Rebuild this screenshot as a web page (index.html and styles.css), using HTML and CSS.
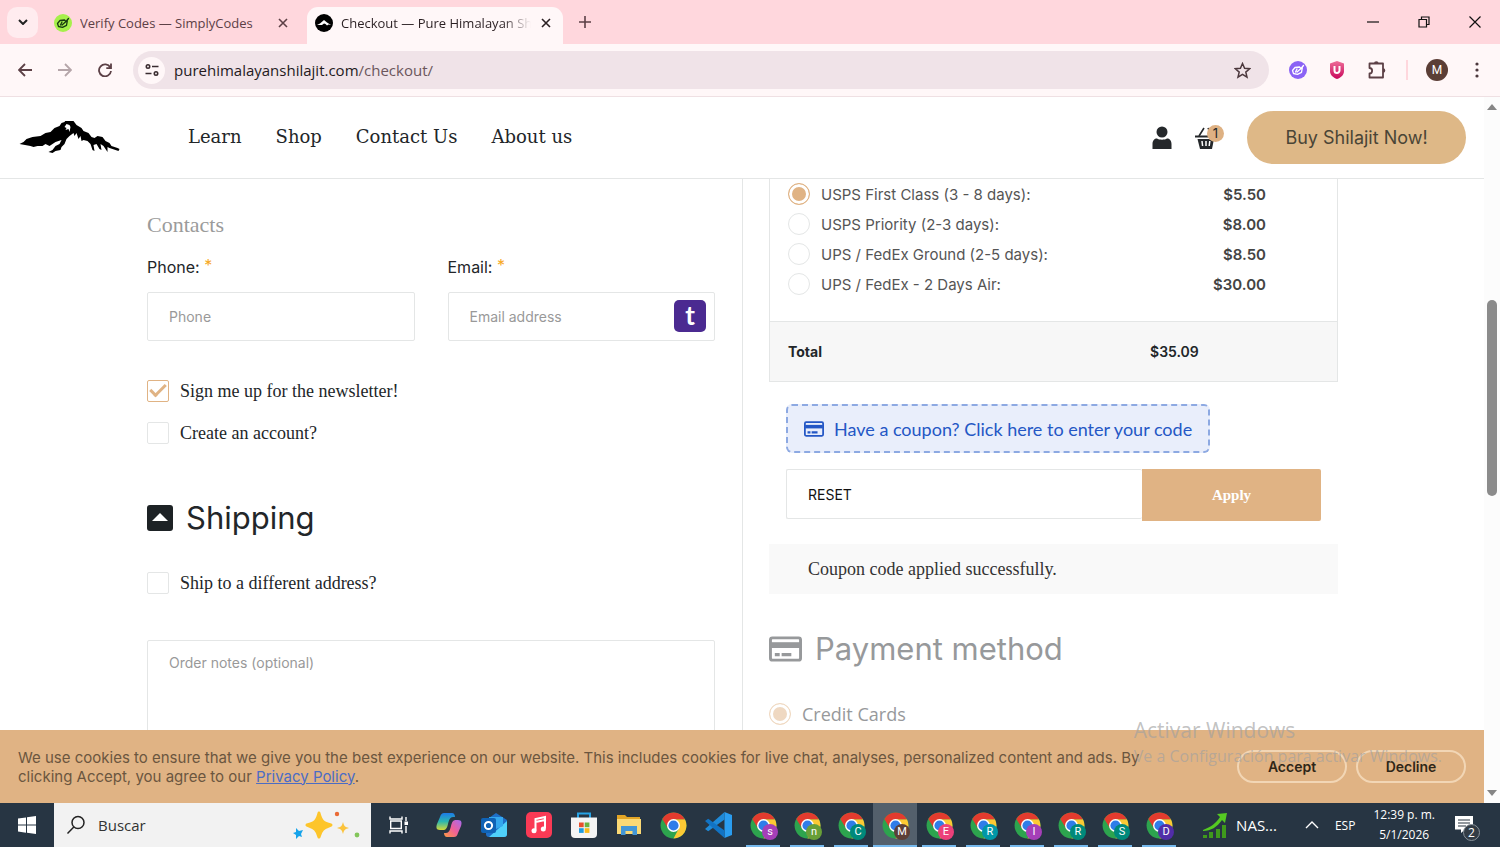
FILE: index.html
```html
<!DOCTYPE html>
<html lang="en">
<head>
    <meta charset="UTF-8">
    <meta name="viewport" content="width=device-width, initial-scale=1.0">
    <title>Checkout — Pure Himalayan Shilajit</title>
    <link rel="stylesheet" href="styles.css">
</head>
<body>
    <!-- shared icons -->
    <svg class="sprite" width="0" height="0" aria-hidden="true">
        <symbol id="i-close" viewBox="0 0 10 10"><path d="M1 1l8 8M9 1l-8 8" fill="none" stroke="currentColor" stroke-width="1.6"/></symbol>
        <symbol id="i-card" viewBox="0 0 34 26">
            <rect x="1.5" y="1.5" width="31" height="23" rx="2" fill="none" stroke="currentColor" stroke-width="3"/>
            <path d="M2 6h30v6H2z" fill="currentColor"/>
            <path d="M6 17h5v3.500H6zM13 17h10v3.500H13z" fill="currentColor"/>
        </symbol>
        <symbol id="i-tag" viewBox="0 0 18 18">
            <path d="M3.500 9.500L6 6.500l4.500-.5 1.500 1.500 2.500-3M3.500 9.500l1 3 4 .8 4-2 .8-4.500M6.500 11l1.500-3M8 11l4-3.500" fill="none" stroke="currentColor" stroke-width="1.3" stroke-linejoin="round" stroke-linecap="round"/>
        </symbol>
        <symbol id="i-chrome" viewBox="0 0 48 48">
            <circle cx="24" cy="24" r="23" fill="#2da44e"/>
            <path d="M24 13h20.300A23 23 0 0 1 24 47l9.500-17.500z" fill="#fcc934"/>
            <path d="M4.100 12.500A23 23 0 0 1 44.300 13H24L14.500 29.500z" fill="#e33b2e"/>
            <circle cx="24" cy="24" r="11.500" fill="#fff"/>
            <circle cx="24" cy="24" r="9" fill="#2f7de9"/>
        </symbol>
    </svg>

    <div class="tab-strip">
        <button class="tab-search" aria-label="Search tabs">
            <svg width="10" height="6" viewBox="0 0 10 6"><path d="M1 1l4 4 4-4" fill="none" stroke="#222" stroke-width="2"/></svg>
        </button>
        <div class="tab">
            <svg class="favicon lime" width="18" height="18"><circle cx="9" cy="9" r="9" fill="#a6f04a"/><use href="#i-tag"/></svg>
            <span class="tab-title">Verify Codes — SimplyCodes</span>
            <button class="tab-close" aria-label="Close tab"><svg width="10" height="10"><use href="#i-close"/></svg></button>
        </div>
        <div class="tab active">
            <svg class="favicon" width="18" height="18" viewBox="0 0 18 18"><circle cx="9" cy="9" r="9" fill="#000"/><path d="M2 11l3-1.500L9 6l3 2.500 4 2.500-2.500-.5-1.500 1-1.500-1.500L9 9.500 7 11l-2 0z" fill="#fff"/></svg>
            <span class="tab-title">Checkout — Pure Himalayan Shilajit</span>
            <button class="tab-close" aria-label="Close tab"><svg width="10" height="10"><use href="#i-close"/></svg></button>
        </div>
        <button class="new-tab" aria-label="New tab"><svg width="12" height="12" viewBox="0 0 12 12"><path d="M6 0v12M0 6h12" stroke="#5c4046" stroke-width="1.600"/></svg></button>
        <div class="window-buttons">
            <button aria-label="Minimize"><svg width="12" height="12" viewBox="0 0 12 12"><path d="M0 6h12" stroke="#111" stroke-width="1.200"/></svg></button>
            <button aria-label="Restore"><svg width="12" height="12" viewBox="0 0 12 12"><path d="M1 3.500h7.500V11H1zM3.500 3.500V1H11v7.500H8.500" fill="none" stroke="#111" stroke-width="1.200"/></svg></button>
            <button aria-label="Close window"><svg width="12" height="12" viewBox="0 0 12 12"><path d="M.5.500l11 11M11.500.500l-11 11" stroke="#111" stroke-width="1.200"/></svg></button>
        </div>
    </div>

    <div class="toolbar">
        <button class="nav-btn" aria-label="Back"><svg width="14" height="14" viewBox="0 0 14 14"><path d="M14 7H1.500M7 1L1 7l6 6" fill="none" stroke="#5c4046" stroke-width="1.800"/></svg></button>
        <button class="nav-btn" aria-label="Forward"><svg width="14" height="14" viewBox="0 0 14 14"><path d="M0 7h12.500M7 1l6 6-6 6" fill="none" stroke="#b5a5a9" stroke-width="1.800"/></svg></button>
        <button class="nav-btn" aria-label="Reload"><svg width="14" height="14" viewBox="0 0 14 14"><path d="M12.300 4.500A6 6 0 1 0 13 8M13 .500v4.700H8.300" fill="none" stroke="#5c4046" stroke-width="1.800"/></svg></button>
        <div class="omnibox">
            <button class="site-info" aria-label="View site information">
                <svg width="14" height="12" viewBox="0 0 14 12"><g fill="none" stroke="#3a2c30" stroke-width="1.600"><circle cx="3" cy="2.500" r="1.700"/><path d="M7 2.500h6.500M.500 9.500h6"/><circle cx="11" cy="9.500" r="1.700"/></g></svg>
            </button>
            <span class="url">purehimalayanshilajit.com<span>/checkout/</span></span>
            <button class="star" aria-label="Bookmark this tab"><svg width="17" height="17" viewBox="0 0 17 17"><path d="M8.500 1.500l2.100 4.700 5.100.5-3.900 3.400 1.200 5-4.500-2.700L4 15.100l1.200-5L1.300 6.700l5.100-.5z" fill="none" stroke="#4c383d" stroke-width="1.500"/></svg></button>
        </div>
        <div class="extensions">
            <svg class="white" width="18" height="18"><circle cx="9" cy="9" r="9" fill="#8b63f5"/><use href="#i-tag"/></svg>
            <svg width="16" height="18" viewBox="0 0 16 18"><defs><linearGradient id="shield" x1="0" y1="0" x2="0" y2="1"><stop offset="0" stop-color="#ee6d98"/><stop offset="1" stop-color="#c8085c"/></linearGradient></defs><path d="M8 0l7 2.500V10c0 4-3 6.500-7 8-4-1.500-7-4-7-8V2.500z" fill="url(#shield)"/><path d="M5.500 5v4.500a2.500 2.500 0 0 0 5 0V5" fill="none" stroke="#fff" stroke-width="2"/></svg>
            <svg width="20" height="20" viewBox="0 0 20 20"><path d="M2.500 3.500h13.500V17.500H2.500v-4c3.500 0 3.500-5.500 0-5.500z" fill="none" stroke="#5c4046" stroke-width="1.800" stroke-linejoin="round"/><path d="M7 3.500a2.300 2.300 0 0 1 4.600 0zM16 8.200a2.300 2.300 0 0 1 0 4.600z" fill="#5c4046"/></svg>
        </div>
        <span class="profile">M</span>
        <button class="menu-btn" aria-label="Menu"><svg width="4" height="16" viewBox="0 0 4 16"><g fill="#4c383d"><circle cx="2" cy="2" r="1.600"/><circle cx="2" cy="8" r="1.600"/><circle cx="2" cy="14" r="1.600"/></g></svg></button>
    </div>

    <div class="viewport">
        <div class="page">
            <header class="site-header">
                <a class="logo" href="#" aria-label="Pure Himalayan Shilajit">
                    <svg width="103" height="34" viewBox="-1 5 102 34"><path fill="#000" fill-rule="evenodd" d="M0 28l4-2 3-3 6-2 8-1 5-3 5-1 4-4 5-2 2-3 3-1 2-3 2-1 5 3 3 4 5 3 2 3 5 2 3 4 3 1 3-2 5 1 3 4 4 2 2 3 6 2 2 1-1 2-9-3-2-1 0 5-2-3-2-3-3-2 1 6-2-1-3-5-3 1 1 6-2-1-2-6-3-3-4-1-2 1-1-5-2 3-2-6-2 3-1-3-4 3-3 3-2 5-3 3-1 3-5 1-3 2-4-1 4-2 3-4 4-2 2-4-6 2-6 4-4-2-3 2-5 0-4 1-3-1zM45 11l2 1-1 2 3-1 1 3 1-5-1-2-3-1z"/></svg>
                </a>
                <nav class="main-nav">
                    <a href="#">Learn</a>
                    <a href="#">Shop</a>
                    <a href="#">Contact Us</a>
                    <a href="#">About us</a>
                </nav>
                <div class="header-tools">
                    <a href="#" aria-label="My account"><svg width="20" height="24" viewBox="0 0 20 24"><circle cx="10" cy="6" r="5.500" fill="#25282b"/><path d="M.500 23v-5c0-3.500 2-5.500 4.500-5.500 2 1.600 8 1.600 10 0 2.500 0 4.500 2 4.500 5.500v5z" fill="#25282b"/></svg></a>
                    <a class="cart" href="#" aria-label="Cart">
                        <svg width="24" height="24" viewBox="0 0 24 24"><path d="M5 10l5-8M18 10l-4-8" stroke="#25282b" stroke-width="1.600"/><path d="M1 9.500h21v2H1z" fill="#25282b"/><path d="M3.500 13h16.500l-2 10h-12z" fill="#25282b"/><path d="M8 15l.6 5M12 15v5M15.800 15l-.6 5" stroke="#fff" stroke-width="1.500"/></svg>
                        <span class="cart-count">1</span>
                    </a>
                    <button class="buy-btn">Buy Shilajit Now!</button>
                </div>
            </header>

            <main class="checkout">
                <section class="details">
                    <h3 class="contacts-title">Contacts</h3>
                    <div class="field-row">
                        <div class="field">
                            <label for="phone">Phone: <sup>*</sup></label>
                            <input class="text-input" id="phone" type="tel" placeholder="Phone">
                        </div>
                        <div class="field">
                            <label for="email">Email: <sup>*</sup></label>
                            <input class="text-input" id="email" type="email" placeholder="Email address">
                            <span class="autofill">t</span>
                        </div>
                    </div>
                    <div class="checks">
                        <label class="check"><input type="checkbox" checked> Sign me up for the newsletter!</label>
                        <label class="check"><input type="checkbox"> Create an account?</label>
                    </div>
                    <h2 class="section-title shipping-title">
                        <svg width="26" height="26" viewBox="0 0 26 26"><rect width="26" height="26" rx="3" fill="#1d2225"/><path d="M5 16l8-8 8 8z" fill="#fff"/></svg>
                        Shipping
                    </h2>
                    <label class="check"><input type="checkbox"> Ship to a different address?</label>
                    <textarea class="notes" placeholder="Order notes (optional)" aria-label="Order notes"></textarea>
                </section>

                <section class="order">
                    <table class="order-table">
                        <tbody>
                            <tr>
                                <td colspan="2">
                                    <ul class="shipping-methods">
                                        <li><input type="radio" name="ship" id="ship1" checked><label for="ship1">USPS First Class (3 - 8 days):</label><b>$5.50</b></li>
                                        <li><input type="radio" name="ship" id="ship2"><label for="ship2">USPS Priority (2-3 days):</label><b>$8.00</b></li>
                                        <li><input type="radio" name="ship" id="ship3"><label for="ship3">UPS / FedEx Ground (2-5 days):</label><b>$8.50</b></li>
                                        <li><input type="radio" name="ship" id="ship4"><label for="ship4">UPS / FedEx - 2 Days Air:</label><b>$30.00</b></li>
                                    </ul>
                                </td>
                            </tr>
                        </tbody>
                        <tfoot>
                            <tr><th>Total</th><td>$35.09</td></tr>
                        </tfoot>
                    </table>

                    <form class="coupon">
                        <a class="coupon-toggle" href="#"><svg width="20" height="16"><use href="#i-card"/></svg>Have a coupon? Click here to enter your code</a>
                        <div class="coupon-form">
                            <input class="text-input" type="text" value="RESET" aria-label="Coupon code">
                            <button type="button">Apply</button>
                        </div>
                    </form>
                    <div class="notice">Coupon code applied successfully.</div>

                    <div class="payment">
                        <h2 class="section-title"><svg width="33" height="26"><use href="#i-card"/></svg>Payment method</h2>
                        <label class="pay-option"><input type="radio" name="pay" checked> Credit Cards</label>
                    </div>
                </section>
            </main>

            <div class="cookie-bar">
                <p>We use cookies to ensure that we give you the best experience on our website. This includes cookies for live chat, analyses, personalized content and ads. By clicking Accept, you agree to our <a href="#">Privacy Policy</a>.</p>
                <button>Accept</button>
                <button>Decline</button>
            </div>
        </div>
        <div class="scrollbar">
            <svg width="12" height="6" viewBox="0 0 12 6"><path d="M1 6l5-6 5 6z" fill="#858585"/></svg>
            <div class="track"><div class="thumb"></div></div>
            <svg width="12" height="6" viewBox="0 0 12 6"><path d="M1 0l5 6 5-6z" fill="#858585"/></svg>
        </div>
    </div>

    <div class="watermark">
        <strong>Activar Windows</strong>
        <span>Ve a Configuración para activar Windows.</span>
    </div>

    <div class="taskbar" lang="es">
        <button class="start" aria-label="Inicio"><svg width="18" height="18" viewBox="0 0 18 18"><path d="M0 2.500L8 1.400V8.600H0zM9 1.200L18 0v8.600H9zM0 9.500h8v7.200L0 15.500zM9 9.500h9V18L9 16.800z" fill="#fff"/></svg></button>
        <label class="search">
            <svg width="20" height="20" viewBox="0 0 20 20"><circle cx="12" cy="7.500" r="6" fill="none" stroke="#222" stroke-width="1.500"/><path d="M7.800 12L1.500 18.500" stroke="#222" stroke-width="1.500"/></svg>
            <input type="text" placeholder="Buscar" aria-label="Buscar">
            <svg width="68" height="30" viewBox="0 0 68 30"><path d="M27 3c2 8 4 10 12 12-8 3-10 5-12 12-2-7-4-9-12-12 8-2 10-4 12-12z" fill="#fdc52b" stroke="#fdc52b" stroke-width="3" stroke-linejoin="round"/><path d="M51 12c1 4 2 5 6 6-4 1-5 2-6 6-1-4-2-5-6-6 4-1 5-2 6-6z" fill="#fbc33b"/><path d="M4 18l3 3 4-1-2 4 1 3-3-1-3 3 0-4-3-2 3-1z" fill="#16a3ea"/><circle cx="45" cy="4" r="2.200" fill="#ea6a35"/><circle cx="65" cy="25" r="2.400" fill="#83c65a"/></svg>
        </label>
        <button class="task-view" aria-label="Vista de tareas"><svg width="20" height="18" viewBox="0 0 20 18"><path d="M1 .500v2.500h12V.500M1 17.500V15h12v2.500M1.700 5h10.600v7.500H1.700zM17 1v4M17 10v7" fill="none" stroke="#fff" stroke-width="1.400"/><path d="M15.500 5.500h3.500v3.500h-3.500z" fill="#fff"/></svg></button>
        <div class="apps">
            <button aria-label="Copilot"><svg width="26" height="26" viewBox="0 0 26 26"><defs><linearGradient id="cop1" x1="0" y1="0" x2="0" y2="1"><stop offset="0" stop-color="#1c7be8"/><stop offset=".5" stop-color="#2bb6b0"/><stop offset="1" stop-color="#d5d937"/></linearGradient><linearGradient id="cop2" x1="1" y1="0" x2="0" y2="1"><stop offset="0" stop-color="#a56bf0"/><stop offset=".5" stop-color="#ee5f9b"/><stop offset="1" stop-color="#ff9c40"/></linearGradient></defs><path d="M8 1h8c2 0 3 2 3 4h-2c-3 0-4 3-5 7s-2 6-5 6H4c-4 0-4-3-3-6l3-7c1-3 2-4 4-4z" fill="url(#cop1)"/><path d="M18 25h-7c-2 0-3-2-3-4h2c3 0 4-3 5-7s2-6 5-6h2c4 0 4 3 3 6l-3 7c-1 3-2 4-4 4z" fill="url(#cop2)"/></svg></button>
            <button aria-label="Outlook"><svg width="28" height="26" viewBox="0 0 28 26"><path d="M6 8l10-7 11 7v14a3 3 0 0 1-3 3H9a3 3 0 0 1-3-3z" fill="#1e6fc8"/><path d="M27 9v13a3 3 0 0 1-3 3H9z" fill="#4fd0fa"/><path d="M9 5h14v9l-7 3-7-3z" fill="#34a7ee"/><rect x="1" y="6" width="15" height="15" rx="2" fill="#0f62b5"/><circle cx="8.500" cy="13.500" r="3.600" fill="none" stroke="#fff" stroke-width="2"/></svg></button>
            <button aria-label="Música"><svg width="26" height="26" viewBox="0 0 26 26"><rect width="26" height="26" rx="5" fill="#fa3a55"/><path d="M9.500 18.500V7l9.500-2v11.500M9.500 10l9.500-2" fill="none" stroke="#fff" stroke-width="2"/><circle cx="8" cy="18.800" r="2.500" fill="#fff"/><circle cx="17.300" cy="17" r="2.500" fill="#fff"/></svg></button>
            <button aria-label="Store"><svg width="26" height="26" viewBox="0 0 26 26"><path d="M7 6V1.500h12V6" fill="none" stroke="#27a3e6" stroke-width="2"/><path d="M0 5.500h26V22a4 4 0 0 1-4 4H4a4 4 0 0 1-4-4z" fill="#f4f4f4"/><path d="M8 10.500h4.700v4.700H8z" fill="#e8502c"/><path d="M13.700 10.500h4.700v4.700h-4.700z" fill="#6db33f"/><path d="M8 16.200h4.700v4.700H8z" fill="#1e9be0"/><path d="M13.700 16.200h4.700v4.700h-4.700z" fill="#f9b91a"/></svg></button>
            <button aria-label="Explorador"><svg width="24" height="22" viewBox="0 0 24 22"><path d="M0 1h8l2 2h13v5H0z" fill="#e2a526"/><path d="M0 5h24v15H0z" fill="#fbd975"/><path d="M4 21V12h16v9h-4.500v-4h-7v4z" fill="#4396d6"/></svg></button>
            <button aria-label="Chrome"><svg width="27" height="27"><use href="#i-chrome"/></svg></button>
            <button aria-label="Visual Studio Code"><svg width="27" height="26" viewBox="0 0 27 26"><path d="M19.500 0L27 3v20l-7.500 3z" fill="#2a9df0"/><path d="M19.500 0v7.500L3.200 19.300 0 17z" fill="#1f8ad8"/><path d="M19.500 26v-7.500L3.200 6.700 0 9z" fill="#1173c4"/></svg></button>
        </div>
        <div class="windows">
            <button aria-label="Chrome s"><svg width="27" height="27"><use href="#i-chrome"/></svg><span class="badge purple">s</span></button>
            <button aria-label="Chrome n"><svg width="27" height="27"><use href="#i-chrome"/></svg><span class="badge green">n</span></button>
            <button aria-label="Chrome C"><svg width="27" height="27"><use href="#i-chrome"/></svg><span class="badge teal">C</span></button>
            <button class="current" aria-label="Chrome M"><svg width="27" height="27"><use href="#i-chrome"/></svg><span class="badge brown">M</span></button>
            <button aria-label="Chrome E"><svg width="27" height="27"><use href="#i-chrome"/></svg><span class="badge pink">E</span></button>
            <button aria-label="Chrome R"><svg width="27" height="27"><use href="#i-chrome"/></svg><span class="badge cyan">R</span></button>
            <button aria-label="Chrome I"><svg width="27" height="27"><use href="#i-chrome"/></svg><span class="badge purple">I</span></button>
            <button aria-label="Chrome R 2"><svg width="27" height="27"><use href="#i-chrome"/></svg><span class="badge teal">R</span></button>
            <button aria-label="Chrome S"><svg width="27" height="27"><use href="#i-chrome"/></svg><span class="badge teal">S</span></button>
            <button aria-label="Chrome D"><svg width="27" height="27"><use href="#i-chrome"/></svg><span class="badge indigo">D</span></button>
        </div>
        <div class="tray">
            <button class="news"><svg width="26" height="26" viewBox="0 0 26 26"><path d="M1 26v-3h4v3zM7 26v-6h4v6zM14 26v-9h4v9zM20 26V13h4v13z" fill="#3f9a1c"/><path d="M1 19c8 0 14-4 19-11l3 3 2-10-10 1 3 3c-4 6-9 10-17 13z" fill="#55c922"/></svg>NAS...</button>
            <button class="up" aria-label="Mostrar iconos ocultos"><svg width="14" height="8" viewBox="0 0 14 8"><path d="M1 7l6-6 6 6" fill="none" stroke="#fff" stroke-width="1.400"/></svg></button>
            <span class="lang">ESP</span>
            <div class="clock"><span>12:39 p. m.</span><span>5/1/2026</span></div>
            <button class="notifications" aria-label="Notificaciones">
                <svg width="18" height="18" viewBox="0 0 18 18"><path d="M0 0h18v13.500h-8L6 17v-3.500H0z" fill="#fff"/><path d="M3 4h12M3 7h12M3 10h8" stroke="#26333f" stroke-width="1.200"/></svg>
                <span class="count">2</span>
            </button>
        </div>
    </div>
</body>
</html>
```

FILE: styles.css
```css
:root {
    --sand: #e0b384;
    --line: #e4e6e6;
    --dark: #222629;
    --sans: Inter, "Open Sans", sans-serif;
    --serif: "Liberation Serif", serif;
    --ui: "Open Sans", "Noto Sans", sans-serif;
}

* {
    margin: 0;
    padding: 0;
    box-sizing: border-box;
}

body {
    height: 100vh;
    display: flex;
    flex-direction: column;
    overflow: hidden;
    position: relative;
    font-family: var(--sans);
    color: var(--dark);
    background: #fff;
}

button {
    border: none;
    background: none;
    font: inherit;
    color: inherit;
    cursor: pointer;
}

a {
    color: inherit;
    text-decoration: none;
}

svg {
    display: block;
    flex: none;
}

.sprite {
    position: absolute;
}

/* browser tabs */
.tab-strip {
    display: flex;
    align-items: center;
    height: 44px;
    padding-left: 7px;
    background: #ffd7dd;
    font: 13px var(--ui);
    color: #5c4046;
}

.tab-search {
    display: grid;
    place-items: center;
    width: 31px;
    height: 31px;
    border-radius: 10px;
    background: #ffecef;
    margin-right: 8px;
}

.tab {
    display: flex;
    align-items: center;
    gap: 8px;
    width: 261px;
    height: 37px;
    margin-top: 7px;
    padding: 0 19px 6px 8px;
}

.tab.active {
    width: 256px;
    padding-right: 12px;
    background: #fff7f8;
    border-radius: 11px 11px 0 0;
    color: #2a1f22;
}

.tab-title {
    flex: 1;
    overflow: hidden;
    white-space: nowrap;
}

.active .tab-title {
    margin-right: 2px;
    mask-image: linear-gradient(to right, #000 85%, transparent);
}

.favicon.lime {
    color: #173a10;
}

.white {
    color: #fff;
}

.new-tab {
    margin-left: 16px;
}

.window-buttons {
    display: flex;
    margin-left: auto;
}

.window-buttons button {
    display: grid;
    place-items: center;
    width: 51px;
    height: 44px;
}

/* browser toolbar */
.toolbar {
    display: flex;
    align-items: center;
    height: 53px;
    padding: 0 21px 0 5px;
    background: #fff7f8;
    border-bottom: 1px solid #efe0e3;
}

.nav-btn {
    display: grid;
    place-items: center;
    width: 40px;
    height: 40px;
}

.omnibox {
    flex: 1;
    display: flex;
    align-items: center;
    height: 38px;
    margin-left: 8px;
    padding: 0 18px 0 5px;
    border-radius: 19px;
    background: #f0e3e8;
    font: 15px var(--ui);
    color: #241a1d;
}

.site-info {
    display: grid;
    place-items: center;
    width: 27px;
    height: 27px;
    margin-right: 9px;
    border-radius: 50%;
    background: #fff7f8;
}

.url {
    flex: 1;
}

.url span {
    color: #6b565c;
}

.extensions {
    display: flex;
    align-items: center;
    gap: 22px;
    padding: 0 19px;
    border-right: 2px solid #ffd7dd;
}

.extensions svg:first-child {
    margin-left: 1px;
}

.profile {
    display: grid;
    place-items: center;
    width: 22px;
    height: 22px;
    margin: 0 27px 0 18px;
    border-radius: 50%;
    background: #5b3e36;
    color: #fff;
    font: 12px Roboto, sans-serif;
}

/* site */
.viewport {
    flex: 1;
    display: flex;
    min-height: 0;
}

.page {
    flex: 1;
    display: flex;
    flex-direction: column;
    min-width: 0;
}

.site-header {
    display: flex;
    align-items: center;
    height: 82px;
    padding: 0 18px;
    border-bottom: 1px solid var(--line);
}

.main-nav {
    display: flex;
    gap: 34px;
    margin-left: 67px;
    padding-bottom: 2px;
    font: 18px "DejaVu Serif", serif;
}

.header-tools {
    display: flex;
    align-items: center;
    gap: 22px;
    margin-left: auto;
}

.cart {
    position: relative;
    margin-right: 7px;
}

.cart-count {
    position: absolute;
    top: -1px;
    right: -6px;
    width: 17px;
    height: 17px;
    border-radius: 50%;
    background: #deb183;
    font-size: 13px;
    line-height: 17px;
    text-align: center;
}

.buy-btn {
    width: 219px;
    height: 53px;
    border-radius: 27px;
    background: #deb887;
    color: #4a4536;
    font-size: 18px;
}

.checkout {
    flex: 1;
    display: flex;
    min-height: 0;
    overflow: hidden;
}

.details {
    width: 50%;
    padding: 32px 27px 0 147px;
}

.order {
    width: 50%;
    padding: 0 146px 0 26px;
    border-left: 1px solid var(--line);
}

.contacts-title {
    margin-bottom: 16px;
    font: 22px/28px var(--serif);
    color: #9b9b9b;
}

.field-row {
    display: flex;
    gap: 33px;
    margin-bottom: 39px;
}

.field {
    flex: 1;
    position: relative;
    min-width: 0;
}

.field label {
    display: block;
    margin-bottom: 13px;
    font-size: 16px;
    line-height: 24px;
}

.field sup {
    color: #f7a823;
    font-size: 16px;
    line-height: 0;
    vertical-align: 2px;
}

.text-input,
.notes {
    display: block;
    width: 100%;
    height: 49px;
    padding: 0 21px;
    border: 1px solid var(--line);
    border-radius: 2px;
    background: #fff;
    font: 14px var(--sans);
    color: #111;
}

::placeholder {
    color: #999;
    opacity: 1;
}

.autofill {
    position: absolute;
    right: 9px;
    bottom: 9px;
    width: 32px;
    height: 32px;
    border-radius: 5px;
    background: #4b2a91;
    color: #fff;
    font: bold 26px/30px Lato, sans-serif;
    text-align: center;
}

.checks {
    display: flex;
    flex-direction: column;
    gap: 20px;
}

.check {
    display: flex;
    align-items: center;
    gap: 11px;
    font: 18px/22px var(--serif);
}

.check input {
    appearance: none;
    width: 22px;
    height: 22px;
    border: 1px solid var(--line);
    border-radius: 2px;
}

.check input:checked {
    border-color: var(--sand);
}

.check input:checked::after {
    content: '';
    display: block;
    width: 16px;
    height: 9px;
    margin: 3px 0 0 2px;
    border: solid var(--sand);
    border-width: 0 0 3px 3px;
    transform: rotate(-45deg);
    box-sizing: border-box;
}

.section-title {
    display: flex;
    align-items: center;
    gap: 13px;
    font: 31px/40px var(--sans);
}

.shipping-title {
    margin: 54px 0 34px;
}

.notes {
    height: 150px;
    margin-top: 46px;
    padding-top: 13px;
    resize: none;
}

/* order summary */
.order-table {
    width: 100%;
    border-collapse: collapse;
    border: 1px solid var(--line);
    border-top: none;
}

.shipping-methods {
    height: 142px;
    padding: 0 71px 0 18px;
    list-style: none;
    font-size: 15px;
    color: #555;
}

.shipping-methods li {
    display: flex;
    align-items: center;
    gap: 11px;
    height: 30px;
}

.shipping-methods b {
    margin-left: auto;
    font-weight: 600;
    color: #444;
}

input[type="radio"] {
    appearance: none;
    width: 22px;
    height: 22px;
    border: 1px solid var(--line);
    border-radius: 50%;
}

input[type="radio"]:checked {
    border-color: var(--sand);
    background: var(--sand);
    box-shadow: inset 0 0 0 3px #fff;
}

.order-table tfoot tr {
    height: 60px;
    border-top: 1px solid var(--line);
    background: #f7f7f7;
    font-size: 14px;
    font-weight: 600;
}

.order-table th {
    width: 67%;
    padding-left: 18px;
    text-align: left;
}

.coupon {
    margin: 22px 17px 23px;
}

.coupon-toggle {
    display: inline-flex;
    align-items: center;
    gap: 10px;
    height: 49px;
    padding: 0 16px;
    border: 2px dashed #8da9e2;
    border-radius: 6px;
    background: #e9eefb;
    color: #2457c5;
    font: 18px Lato, sans-serif;
}

.coupon-form {
    display: flex;
    margin-top: 16px;
}

.coupon-form .text-input {
    flex: 1;
    height: 50px;
    border-right: none;
}

.coupon-form button {
    width: 179px;
    height: 52px;
    border-radius: 0 2px 2px 0;
    background: var(--sand);
    color: #fff;
    font: bold 15px var(--serif);
}

.notice {
    padding: 0 39px;
    background: #f9f9f9;
    color: #333;
    font: 18px/50px var(--serif);
}

.payment {
    margin-top: 35px;
    color: #97999b;
}

.pay-option {
    display: flex;
    align-items: center;
    gap: 11px;
    margin-top: 34px;
    font: 18px/22px "Open Sans", sans-serif;
}

.pay-option input {
    opacity: .5;
}

/* cookie notice */
.cookie-bar {
    display: flex;
    align-items: center;
    gap: 9px;
    height: 73px;
    padding: 0 18px;
    background: var(--sand);
}

.cookie-bar p {
    flex: 1;
    padding-right: 30px;
    font-size: 15px;
    line-height: 19px;
    color: #6b563f;
}

.cookie-bar a {
    color: #4b6cc4;
    text-decoration: underline;
}

.cookie-bar button {
    width: 110px;
    height: 33px;
    border: 2px solid #f2d6b5;
    border-radius: 17px;
    color: #2f2618;
    font-size: 14px;
    font-weight: 600;
}

.scrollbar {
    display: flex;
    flex-direction: column;
    align-items: center;
    width: 16px;
    padding: 7px 0;
    background: #fcfcfc;
}

.track {
    flex: 1;
    width: 10px;
    padding-top: 190px;
}

.thumb {
    height: 196px;
    border-radius: 5px;
    background: #8b8b8b;
}

.watermark {
    position: absolute;
    right: 58px;
    bottom: 79px;
    display: flex;
    flex-direction: column;
    font: 16px/24px var(--ui);
    color: rgba(160, 160, 160, .65);
    pointer-events: none;
}

.watermark strong {
    font-size: 21px;
    font-weight: normal;
    line-height: 28px;
}

/* taskbar */
.taskbar {
    display: flex;
    height: 44px;
    background: #273543;
    color: #fff;
    font: 14px var(--ui);
}

.taskbar button {
    display: grid;
    place-items: center;
}

.start {
    width: 54px;
}

.search {
    display: flex;
    align-items: center;
    gap: 12px;
    width: 317px;
    padding: 0 11px 0 12px;
    background: #f2f2f2;
}

.search input {
    flex: 1;
    min-width: 0;
    border: none;
    background: none;
    font: 15px var(--ui);
}

.search ::placeholder {
    color: #333;
}

.task-view {
    width: 55px;
}

.apps,
.windows {
    display: flex;
}

.apps button {
    width: 45px;
}

.windows button {
    position: relative;
    width: 44px;
}

.windows button::after {
    content: '';
    position: absolute;
    bottom: 0;
    width: 34px;
    height: 2px;
    background: #76b9ed;
}

.windows .current {
    background: #53606c;
}

.windows .current::after {
    width: 44px;
}

.badge {
    position: absolute;
    left: 21px;
    top: 21px;
    width: 16px;
    height: 16px;
    border-radius: 50%;
    font: 11px/16px Roboto, sans-serif;
    text-align: center;
}

.purple { background: #a53fb8; }
.green { background: #689f38; }
.teal { background: #00897b; }
.brown { background: #5d4037; }
.pink { background: #ec407a; }
.cyan { background: #0097a7; }
.indigo { background: #512da8; }

.tray {
    flex: 1;
    display: flex;
    align-items: center;
    justify-content: flex-end;
}

.tray .news {
    display: flex;
    align-items: center;
    gap: 8px;
    margin-right: 28px;
    font-size: 15px;
}

.up {
    margin-right: 16px;
}

.lang {
    margin-right: 18px;
    font-size: 12px;
}

.clock {
    display: flex;
    flex-direction: column;
    align-items: center;
    margin-right: 20px;
    font-size: 12px;
    line-height: 20px;
}

.notifications {
    position: relative;
    margin-right: 27px;
}

.count {
    position: absolute;
    left: 8px;
    top: 8px;
    width: 17px;
    height: 17px;
    border: 1px solid #8a939b;
    border-radius: 50%;
    background: #333c45;
    font-size: 12px;
    line-height: 15px;
}
```
